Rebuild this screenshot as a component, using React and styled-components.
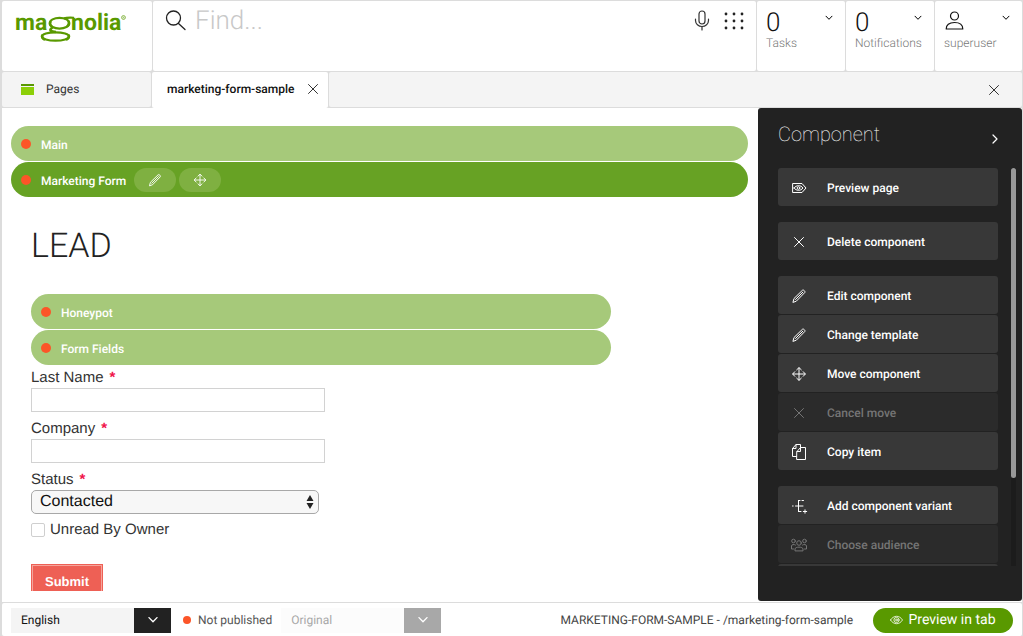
import React from "react";
import styled, { createGlobalStyle } from "styled-components";

const GlobalStyle = createGlobalStyle`
  * {
    box-sizing: border-box;
  }
  body {
    margin: 0;
    background: #dcdcdc;
    font-family: Roboto, "Liberation Sans", sans-serif;
    font-size: 12px;
    color: #222;
    text-rendering: geometricPrecision;
  }
  button, input, select {
    font-family: inherit;
    text-rendering: inherit;
  }
`;

const Shell = styled.div`
  height: 100vh;
  padding: 1px 1px 0 2px;
  display: flex;
  flex-direction: column;
  gap: 1px;
`;

/* ---------- header ---------- */

const Header = styled.header`
  display: flex;
  gap: 1px;
  height: 70px;
`;

const Card = styled.div`
  background: #fff;
  border-radius: 2px;
`;

const LogoCard = styled(Card)`
  width: 150px;
  padding: 9px 0 0 12px;
`;

const SearchCard = styled(Card)`
  flex: 1;
  display: flex;
  align-items: flex-start;
  padding: 8px 12px 0 12px;
`;

const SearchInput = styled.input`
  flex: 1;
  min-width: 0;
  height: 24px;
  border: 0;
  padding: 0;
  margin-left: 8px;
  outline: 0;
  font-size: 26px;
  font-weight: 300;
  line-height: 24px;
  color: #222;
  &::placeholder {
    color: #c8c8c8;
    opacity: 1;
  }
`;

const IconButton = styled.button`
  display: flex;
  align-items: center;
  justify-content: center;
  border: 0;
  padding: 0;
  background: none;
  color: ${(p) => p.$color || "#333"};
  cursor: pointer;
`;

const SearchTools = styled.div`
  display: flex;
  gap: 14px;
`;

const StatCard = styled(Card).attrs({ as: "button" })`
  width: 88px;
  border: 0;
  padding: 8px 12px 0 9px;
  text-align: left;
  display: flex;
  flex-direction: column;
  cursor: pointer;
  &:last-child {
    width: 87px;
  }
`;

const StatTop = styled.span`
  display: flex;
  justify-content: space-between;
  align-self: stretch;
  height: 28px;
`;

const StatValue = styled.span`
  font-size: 26px;
  font-weight: 300;
  line-height: 28px;
  color: #111;
`;

const StatLabel = styled.span`
  font-size: 12px;
  font-weight: 300;
  line-height: 12px;
  color: #777;
`;

/* ---------- tabs ---------- */

const TabBar = styled.nav`
  display: flex;
  gap: 1px;
  height: 35px;
`;

const Tab = styled.div`
  width: ${(p) => p.$width};
  height: ${(p) => (p.$active ? "36px" : "35px")};
  padding: 0 10px ${(p) => (p.$active ? "2px" : "1px")} ${(p) => (p.$active ? "15px" : "19px")};
  display: flex;
  align-items: center;
  justify-content: space-between;
  background: ${(p) => (p.$active ? "#fff" : "#f4f4f4")};
  border-radius: 2px;
`;

const TabLink = styled.a`
  display: flex;
  align-items: center;
  gap: 12px;
  line-height: 16px;
  color: ${(p) => (p.$active ? "#111" : "#333")};
  font-weight: ${(p) => (p.$active ? 500 : 400)};
  text-decoration: none;
`;

const TabRest = styled.div`
  flex: 1;
  display: flex;
  align-items: center;
  justify-content: flex-end;
  padding-right: 23px;
  background: #f4f4f4;
  border-radius: 2px;
`;

/* ---------- work area ---------- */

const Work = styled.main`
  flex: 1;
  min-height: 0;
  display: flex;
  gap: 10px;
  background: #fff;
  padding-bottom: 1px;
`;

const Page = styled.section`
  flex: 1;
  min-width: 0;
  margin: 0 0 10px 9px;
  padding-top: 18px;
  overflow: hidden;
`;

const Bar = styled.div`
  height: 35px;
  margin-bottom: 1px;
  padding-left: 10px;
  border-radius: 18px;
  display: flex;
  align-items: center;
  background: ${(p) => (p.$selected ? "#67a224" : "#a6c97a")};
  color: #fff;
`;

const Dot = styled.span`
  width: ${(p) => p.$size}px;
  height: ${(p) => p.$size}px;
  border-radius: 50%;
  background: #fc5528;
`;

const BarLabel = styled.span`
  margin: 2px 8px 0 10px;
  font-size: 12px;
  font-weight: 500;
  line-height: 16px;
`;

const BarButton = styled.button`
  width: 42px;
  height: 24px;
  margin-right: 3px;
  border: 0;
  border-radius: 12px;
  padding: 0;
  display: flex;
  align-items: center;
  justify-content: center;
  background: #7fb041;
  color: #fff;
`;

const Lead = styled.form`
  padding-left: 20px;
  font-family: "Liberation Sans", Arial, sans-serif;
  font-size: 15px;
  color: #333;
`;

const LeadTitle = styled.h1`
  margin: 29px 0 28px;
  font-family: Roboto, sans-serif;
  font-size: 34px;
  font-weight: 300;
  line-height: 40px;
  color: #222;
`;

const Nested = styled.div`
  width: 580px;
  max-width: 100%;
  font-family: Roboto, sans-serif;
`;

const Field = styled.div`
  display: flex;
  flex-direction: column;
  align-items: flex-start;
  height: 51px;
`;

const FieldLabel = styled.label`
  padding-top: 2px;
  line-height: 20px;
`;

const Star = styled.span`
  margin-left: 6px;
  font-weight: 700;
  color: #f0144b;
`;

const TextInput = styled.input`
  width: 294px;
  height: 24px;
  border: 1px solid #d2d2d2;
  padding: 0 6px;
  font-size: 15px;
`;

const StatusSelect = styled.select`
  appearance: none;
  width: 288px;
  height: 24px;
  border: 1px solid #a8a8a8;
  border-radius: 5px;
  padding: 0 24px 0 8px;
  background: #f7f7f7;
  font-size: 16px;
  line-height: 20px;
  color: #111;
`;

const SelectWrap = styled.div`
  position: relative;
  display: flex;
`;

const SelectMark = styled.span`
  position: absolute;
  top: 0;
  right: 0;
  height: 100%;
  width: ${(p) => p.$width}px;
  display: flex;
  align-items: center;
  justify-content: center;
  background: ${(p) => p.$bg || "none"};
  color: #fff;
  pointer-events: none;
`;

const CheckLabel = styled.label`
  display: flex;
  align-items: center;
  gap: 5px;
  height: 22px;
  line-height: 22px;
`;

const Check = styled.input`
  appearance: none;
  width: 14px;
  height: 14px;
  margin: 0;
  border: 1px solid #cfcfcf;
  border-radius: 2px;
  background: #fff;
  &:checked {
    background: #67a224;
  }
`;

const Submit = styled.button`
  margin-top: 23px;
  width: 72px;
  height: 34px;
  border: 0;
  outline: 1px solid #f5a49b;
  outline-offset: -2px;
  padding: 0;
  background: #ee6055;
  font-size: 13px;
  font-weight: 700;
  color: #fff;
`;

/* ---------- action panel ---------- */

const Panel = styled.aside`
  width: 264px;
  display: flex;
  flex-direction: column;
  padding: 14px 6px 35px 20px;
  border-radius: 3px;
  background: #222;
  color: #fff;
`;

const PanelHead = styled.div`
  display: flex;
  justify-content: space-between;
  align-items: flex-start;
  height: 46px;
  padding-right: 17px;
`;

const PanelTitle = styled.h2`
  margin: 0;
  font-size: 20px;
  font-weight: 100;
  line-height: 24px;
`;

const PanelToggle = styled(IconButton)`
  height: 34px;
`;

const PanelBody = styled.div`
  flex: 1;
  min-height: 0;
  display: flex;
  gap: 13px;
`;

const Actions = styled.div`
  flex: 1;
  display: flex;
  flex-direction: column;
  gap: 16px;
  overflow: hidden;
`;

const ActionGroup = styled.div`
  display: flex;
  flex: none;
  flex-direction: column;
  gap: 1px;
`;

const Action = styled.button`
  height: 38px;
  flex: none;
  border: 0;
  border-radius: 3px;
  padding: 2px 10px 0;
  display: flex;
  align-items: center;
  gap: 17px;
  background: #383838;
  color: #fff;
  font-size: 12px;
  font-weight: 500;
  text-align: left;
  &:disabled {
    background: #2b2b2b;
    color: #757575;
  }
`;

const Track = styled.div`
  width: 5px;
  background: #1c1c1c;
`;

const Thumb = styled.div`
  height: 78%;
  border-radius: 3px;
  background: #999;
`;

/* ---------- footer ---------- */

const Footer = styled.footer`
  height: 33px;
  display: flex;
  align-items: center;
  padding: 1px 9px 0;
  background: #fff;
  border-radius: 2px;
`;

const FooterSelect = styled.select`
  appearance: none;
  width: 160px;
  height: 25px;
  border: 0;
  padding: 0 47px 0 10px;
  background: ${(p) => (p.disabled ? "#fcfcfc" : "#f4f4f4")};
  color: ${(p) => (p.disabled ? "#a8a8a8" : "#111")};
  font-size: 12px;
  opacity: 1;
`;

const Published = styled.div`
  display: flex;
  align-items: center;
  gap: 7px;
  margin: 0 9px 0 12px;
  font-size: 12px;
  color: #555;
`;

const Path = styled.div`
  flex: 1;
  text-align: right;
  margin-right: 20px;
  font-size: 12px;
  white-space: nowrap;
  color: #444;
`;

const PreviewButton = styled.button`
  width: 140px;
  height: 25px;
  border: 0;
  border-radius: 13px;
  padding: 0;
  display: flex;
  align-items: center;
  justify-content: center;
  gap: 5px;
  background: #599900;
  color: #fff;
  font-size: 14px;
`;

/* ---------- icons ---------- */

const Svg = ({ w = 24, h = w, view, children, stroke = 1 }) => (
  <svg
    width={w}
    height={h}
    viewBox={view || `0 0 ${w} ${h}`}
    fill="none"
    stroke="currentColor"
    strokeWidth={stroke}
    strokeLinecap="round"
    strokeLinejoin="round"
    aria-hidden="true"
  >
    {children}
  </svg>
);

const Logo = () => (
  <svg width="114" height="36" role="img" aria-label="magnolia" fill="#599900">
    <g fontFamily="Roboto, sans-serif" fontWeight="700" fontSize="23">
      <text x="1" y="20">ma</text>
      <text x="57" y="20">nolia</text>
    </g>
    <g fill="none" stroke="#599900">
      <ellipse cx="45.5" cy="13.2" rx="9.8" ry="5.4" strokeWidth="2.2" />
      <path d="M37 11 C35.6 13 36 15 38 16.500 M54 10.500 C55.4 12 55 15 53 16.500" strokeWidth="2.4" />
      <path d="M50 8.4 C53 7.4 56 7.6 60 7.8" strokeWidth="2.2" />
      <path d="M39 17 C34.500 20 36 21.8 42 22" strokeWidth="2.6" />
      <ellipse cx="41.500" cy="26.500" rx="13.6" ry="4.2" strokeWidth="2.2" />
      <path d="M28.500 25 C27.500 27 28.500 28.500 31 29.600 M54.500 25 C55.500 27 54.500 28.500 52 29.600" strokeWidth="2.8" />
      <circle cx="109.500" cy="7.500" r="1.9" strokeWidth="0.7" />
      <circle cx="109.500" cy="7.500" r="0.5" strokeWidth="0.5" />
    </g>
  </svg>
);

const SearchIcon = () => (
  <Svg w={22}>
    <circle cx="8.500" cy="9" r="7" strokeWidth="1.3" />
    <path d="M13.500 14.500 L20 20.500" strokeWidth="1.3" />
  </Svg>
);

const MicIcon = () => (
  <Svg w={16} h={22}>
    <rect x="5" y="2" width="6" height="13" rx="3" strokeWidth="1.200" />
    <path d="M1.500 10 V11.500 A6.500 6 0 0 0 14.500 11.500 V10 M8 17.500 V21" strokeWidth="1.200" />
  </Svg>
);

const AppsIcon = () => (
  <Svg w={20} h={22}>
    {[5, 12, 19].map((y) =>
      [2, 10, 18].map((x) => (
        <circle key={x + "-" + y} cx={x} cy={y} r="1.4" fill="#222" stroke="none" />
      ))
    )}
  </Svg>
);

const ChevronDown = ({ w = 8 }) => (
  <Svg w={w} h={w / 2 + 2} view="0 0 8 6">
    <path d="M1 1.200 L4 4.300 L7 1.200" />
  </Svg>
);

const ChevronRight = () => (
  <Svg w={8} h={10}>
    <path d="M2 1 L6 5 L2 9" strokeWidth="1.200" />
  </Svg>
);

const UserIcon = () => (
  <Svg w={21} h={20}>
    <circle cx="10.500" cy="5" r="4" strokeWidth="1.200" />
    <path d="M2.200 18 C2.200 13.800 5 11.500 10.500 11.500 C16 11.500 18.800 13.800 18.800 18 Z" strokeWidth="1.200" />
  </Svg>
);

const CrossIcon = () => (
  <Svg w={10}>
    <path d="M0.500 0.500 L9.500 9.500 M9.500 0.500 L0.500 9.500" />
  </Svg>
);

const PagesIcon = () => (
  <svg width="13" height="11" aria-hidden="true">
    <rect width="13" height="2" fill="#599900" />
    <rect y="3" width="13" height="8" fill="#8ccf08" />
  </svg>
);

const glyphs = {
  preview: (
    <>
      <path d="M5 6.500 H14 L18 11 L14 15.500 H5 Z" />
      <path d="M6 11 C8.500 7.800 12.500 7.800 15 11 C12.500 14.200 8.500 14.200 6 11 Z" />
      <circle cx="10.500" cy="11" r="1.300" />
    </>
  ),
  cross: <path d="M6.500 6.500 L15.500 15.500 M15.500 6.500 L6.500 15.500" />,
  pencil: (
    <path d="M5 17 L6 13.500 L14.500 5.200 C15.500 4.400 17.600 6.500 16.800 7.500 L8.500 16 Z M7.500 14.500 L14.800 7.200" />
  ),
  move: (
    <path d="M11 5 V17 M5 11 H17 M8.700 6.800 L11 4.600 L13.300 6.800 M8.700 15.200 L11 17.400 L13.300 15.200 M6.800 8.700 L4.600 11 L6.800 13.300 M15.200 8.700 L17.400 11 L15.200 13.300" />
  ),
  copy: (
    <path d="M8.500 15.500 H4.500 V7.500 L8 3.500 H12.500 V6 M4.500 7.500 H8 V3.500 M9 10.500 L12.500 6.500 H17.500 V18.500 H9 Z M9 10.500 H12.500 V6.500" />
  ),
  variant: (
    <path d="M4.500 11 H5.200 M7.500 11 H15 M10.500 5.500 V16.500 M10.500 5.500 H12 M14 5.500 H15.500 M10.500 16.500 H13 M17 14.800 V18.200 M15.300 16.500 H18.700" />
  ),
  audience: (
    <>
      <circle cx="11" cy="9" r="2.300" />
      <circle cx="5.500" cy="7" r="1.800" />
      <circle cx="16.500" cy="7" r="1.800" />
      <path d="M7 16.500 V15 C7 12.500 15 12.500 15 15 V16.500 Z M5.500 15 H3.500 V12 C3.500 10.500 6 10 7.500 11 M16.500 15 H18.500 V12 C18.500 10.500 16 10 14.500 11" />
    </>
  ),
};

const Glyph = ({ name, size = 22 }) => (
  <Svg w={size} view="0 0 22 22">
    {glyphs[name]}
  </Svg>
);

const EyeIcon = () => (
  <Svg w={13} h={10} stroke={0.8}>
    <path d="M0.500 5 C3.500 0 9.500 0 12.500 5 C9.500 10 3.500 10 0.500 5 Z" />
    <circle cx="6.500" cy="5" r="2.600" />
    <circle cx="6.500" cy="5" r="0.900" />
  </Svg>
);

const UpDown = () => (
  <svg width="8" height="16" fill="#222" aria-hidden="true">
    <path d="M4 1 L7.500 7 H0.500 Z M4 15 L7.500 9 H0.500 Z" />
  </svg>
);

/* ---------- app ---------- */

const groups = [
  [{ label: "Preview page", icon: "preview" }],
  [{ label: "Delete component", icon: "cross" }],
  [
    { label: "Edit component", icon: "pencil" },
    { label: "Change template", icon: "pencil" },
    { label: "Move component", icon: "move" },
    { label: "Cancel move", icon: "cross", disabled: true },
    { label: "Copy item", icon: "copy" },
  ],
  [
    { label: "Add component variant", icon: "variant" },
    { label: "Choose audience", icon: "audience", disabled: true },
    { label: "", icon: "" },
  ],
];

const AreaBar = ({ label, selected, children }) => (
  <Bar $selected={selected}>
    <Dot $size={10} />
    <BarLabel>{label}</BarLabel>
    {children}
  </Bar>
);

const Chevron = styled.span`
  display: flex;
  align-items: flex-start;
  padding-top: 6px;
`;

const Stat = ({ value, label }) => (
  <StatCard>
    <StatTop>
      <StatValue>{value}</StatValue>
      <Chevron>
        <ChevronDown />
      </Chevron>
    </StatTop>
    <StatLabel>{label}</StatLabel>
  </StatCard>
);

export default function App() {
  return (
    <>
      <GlobalStyle />
      <Shell>
        <Header>
          <LogoCard>
            <Logo />
          </LogoCard>
          <SearchCard>
            <SearchIcon />
            <SearchInput placeholder="Find..." aria-label="Find" />
            <SearchTools>
              <IconButton aria-label="Voice search"><MicIcon /></IconButton>
              <IconButton aria-label="Apps"><AppsIcon /></IconButton>
            </SearchTools>
          </SearchCard>
          <Stat value="0" label="Tasks" />
          <Stat value="0" label="Notifications" />
          <Stat value={<UserIcon />} label="superuser" />
        </Header>

        <TabBar>
          <Tab $width="149px">
            <TabLink href="#pages"><PagesIcon />Pages</TabLink>
          </Tab>
          <Tab $width="176px" $active>
            <TabLink href="#sample" $active>marketing-form-sample</TabLink>
            <IconButton aria-label="Close tab"><CrossIcon /></IconButton>
          </Tab>
          <TabRest>
            <IconButton aria-label="Close all"><CrossIcon /></IconButton>
          </TabRest>
        </TabBar>

        <Work>
          <Page>
            <AreaBar label="Main" />
            <AreaBar label="Marketing Form" selected>
              <BarButton aria-label="Edit"><Glyph name="pencil" size={20} /></BarButton>
              <BarButton aria-label="Move"><Glyph name="move" size={20} /></BarButton>
            </AreaBar>
            <Lead onSubmit={(e) => e.preventDefault()}>
              <LeadTitle>LEAD</LeadTitle>
              <Nested>
                <AreaBar label="Honeypot" />
                <AreaBar label="Form Fields" />
              </Nested>
              <Field>
                <FieldLabel htmlFor="lastName">Last Name<Star>*</Star></FieldLabel>
                <TextInput id="lastName" />
              </Field>
              <Field>
                <FieldLabel htmlFor="company">Company<Star>*</Star></FieldLabel>
                <TextInput id="company" />
              </Field>
              <Field>
                <FieldLabel htmlFor="status">Status<Star>*</Star></FieldLabel>
                <SelectWrap>
                  <StatusSelect id="status">
                    <option>Contacted</option>
                  </StatusSelect>
                  <SelectMark $width={18}><UpDown /></SelectMark>
                </SelectWrap>
              </Field>
              <CheckLabel>
                <Check type="checkbox" />
                Unread By Owner
              </CheckLabel>
              <Submit type="submit">Submit</Submit>
            </Lead>
          </Page>

          <Panel>
            <PanelHead>
              <PanelTitle>Component</PanelTitle>
              <PanelToggle aria-label="Collapse" $color="#fff"><ChevronRight /></PanelToggle>
            </PanelHead>
            <PanelBody>
              <Actions>
                {groups.map((items, i) => (
                  <ActionGroup key={i}>
                    {items.map((item) => (
                      <Action key={item.label} disabled={item.disabled}>
                        <Glyph name={item.icon} />
                        {item.label}
                      </Action>
                    ))}
                  </ActionGroup>
                ))}
              </Actions>
              <Track>
                <Thumb />
              </Track>
            </PanelBody>
          </Panel>
        </Work>

        <Footer>
          <SelectWrap>
            <FooterSelect aria-label="Language">
              <option>English</option>
            </FooterSelect>
            <SelectMark $width={37} $bg="#222"><ChevronDown w={12} /></SelectMark>
          </SelectWrap>
          <Published>
            <Dot $size={8} />
            Not published
          </Published>
          <SelectWrap>
            <FooterSelect aria-label="Variant" disabled>
              <option>Original</option>
            </FooterSelect>
            <SelectMark $width={37} $bg="#a8a8a8"><ChevronDown w={12} /></SelectMark>
          </SelectWrap>
          <Path>MARKETING-FORM-SAMPLE - /marketing-form-sample</Path>
          <PreviewButton><EyeIcon />Preview in tab</PreviewButton>
        </Footer>
      </Shell>
    </>
  );
}
